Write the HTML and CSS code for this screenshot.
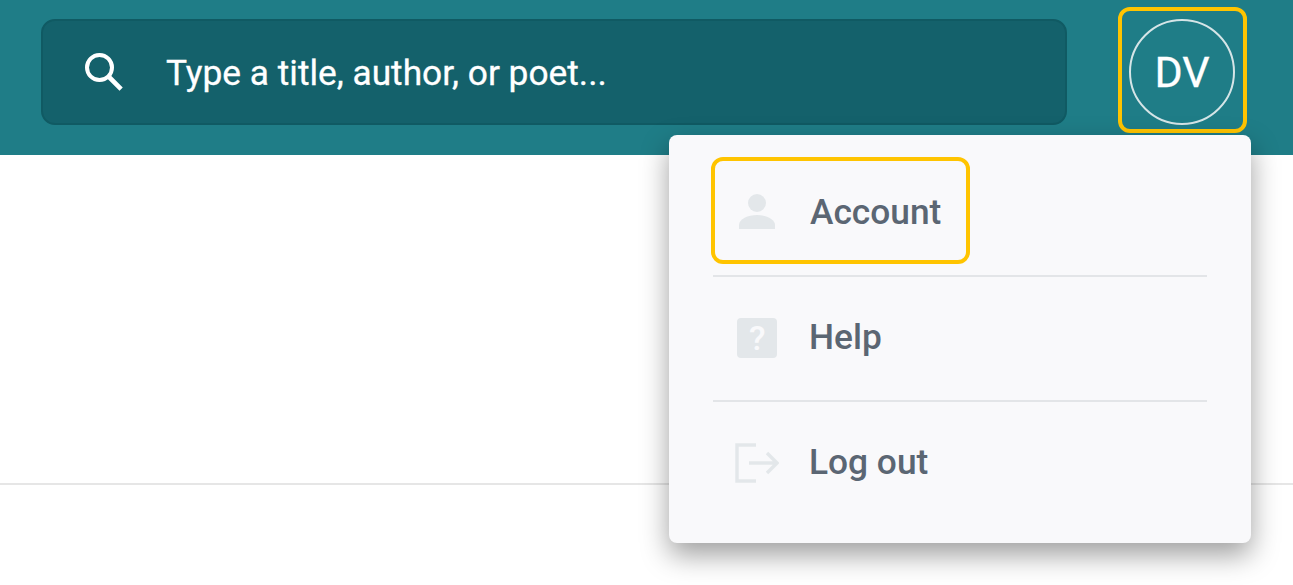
FILE: index.html
```html
<!DOCTYPE html>
<html>
<head>
	<title>Search</title>
	<meta charset="utf-8">
	<link rel="stylesheet" href="styles.css">
</head>
<body>
	<div class="header">
		<div class="search">
			<svg class="search-icon" width="42" height="42" viewBox="0 0 42 42"><circle cx="16.5" cy="16.5" r="12.5" fill="none" stroke="#fff" stroke-width="4"/><path d="M26 26L36.5 36.5" stroke="#fff" stroke-width="4.6" stroke-linecap="square" fill="none"/></svg>
			<span class="placeholder">Type a title, author, or poet...</span>
		</div>
		<div class="avatar-box"><div class="avatar">DV</div></div>
	</div>
	<div class="content"><div class="rule"></div></div>

	<div class="menu">
		<div class="item item-account">
			<svg class="icon" width="38" height="38" viewBox="0 0 38 38"><circle cx="19" cy="11" r="9" fill="#e3e7ea"/><path d="M1 37v-4c0-6 9-10 18-10s18 4 18 10v4z" fill="#e3e7ea"/></svg>
			<span>Account</span>
		</div>
		<div class="divider"></div>
		<div class="item">
			<svg class="icon" width="40" height="40" viewBox="0 0 40 40"><rect width="40" height="40" rx="4" fill="#e3e7ea"/></svg>
			<span class="help-mark">?</span>
			<span>Help</span>
		</div>
		<div class="divider"></div>
		<div class="item">
			<svg class="icon icon-logout" width="44" height="40" viewBox="0 0 44 40"><path d="M21 2H2v36h19M14 20h27M32 10l10 10-10 10" fill="none" stroke="#e3e7ea" stroke-width="3.4"/></svg>
			<span>Log out</span>
		</div>
	</div>
</body>
</html>
```
FILE: styles.css
```css
body,div{margin:0;padding:0;}
body{background:#fff;font-family:Roboto,"Liberation Sans",sans-serif;height:585px;overflow:hidden;position:relative;}
.header{height:155px;background:#1f7d87;display:flex;align-items:flex-start;padding:7px 46px 0 41px;box-sizing:border-box;}
.search{flex:1;height:106px;margin-top:12px;background:#14616b;border:2px solid #105a63;border-radius:14px;box-sizing:border-box;display:flex;align-items:center;padding-left:40px;color:#fff;}
.search-icon{margin-right:41px;}
.placeholder{font-size:35.3px;margin-top:1px;-webkit-text-stroke:.3px #fff;}
.avatar-box{width:129px;height:126px;margin-left:51px;border:4px solid #ffc400;border-radius:12px;box-sizing:border-box;display:flex;align-items:center;justify-content:center;padding:4px 1px 0 0;}
.avatar{width:106px;height:106px;flex:none;border:2px solid #d5e5e7;border-radius:50%;box-sizing:border-box;display:flex;align-items:center;justify-content:center;color:#fff;font-size:43px;-webkit-text-stroke:.3px #fff;}
.content{padding-top:328px;}
.rule{height:2px;background:#e6e6e6;}
.menu{position:absolute;left:669px;top:135px;width:582px;height:408px;background:#f9f9fb;border-radius:8px;box-shadow:0 12px 28px rgba(0,0,0,.38);box-sizing:border-box;padding:22px 44px 0;}
.item{height:107px;display:flex;align-items:center;font-size:35.3px;font-weight:500;color:#5b6673;padding-left:24px;position:relative;margin-bottom:9px;box-sizing:border-box;}
.item span{margin-left:72px;margin-top:-1px;}
.item-account{width:259px;margin-left:-2px;margin-bottom:11px;padding-left:23px;border:4px solid #ffc400;border-radius:12px;}
.item-account span{margin-top:3px;}
.icon{position:absolute;left:24px;}
.item-account .icon{left:23px;}
.icon-logout{left:22px;}
.item .help-mark{position:absolute;left:36px;margin:0;color:#f9f9fb;font-size:34px;}
.divider{height:2px;background:#e3e5e8;margin-bottom:7px;}
```
